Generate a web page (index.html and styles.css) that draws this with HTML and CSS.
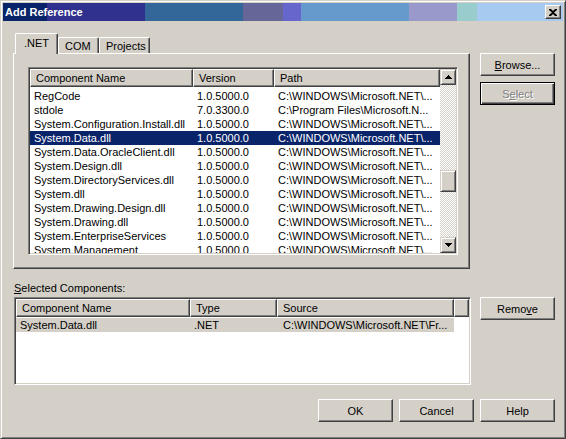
FILE: index.html
```html
<!DOCTYPE html>
<html>
<head>
<meta charset="utf-8">
<title>Add Reference</title>
<link rel="stylesheet" href="styles.css">
</head>
<body>
<div class="window">
  <div class="titlebar">
    <span class="title">Add Reference</span>
    <span class="close"><svg width="8" height="7" viewBox="0 0 8 7"><path d="M0 0h2l2 2 2-2h2v1L5 3.5 8 6v1H6L4 5 2 7H0V6l3-2.5L0 1z" fill="#000"/></svg></span>
  </div>
  <div class="content">
    <div class="left-top">
      <div class="tabstrip">
        <div class="tab active">.NET</div>
        <div class="tab com">COM</div>
        <div class="tab projects">Projects</div>
      </div>
      <div class="tabpanel">
        <div class="listview">
          <div class="lv-main">
            <div class="header">
              <div class="hcol w-name">Component Name</div>
              <div class="hcol w-ver">Version</div>
              <div class="hcol w-path">Path</div>
            </div>
            <div class="rows">
              <div class="row"><span class="w-name">RegCode</span><span class="w-ver">1.0.5000.0</span><span class="w-path">C:\WINDOWS\Microsoft.NET\...</span></div>
              <div class="row"><span class="w-name">stdole</span><span class="w-ver">7.0.3300.0</span><span class="w-path">C:\Program Files\Microsoft.N...</span></div>
              <div class="row"><span class="w-name">System.Configuration.Install.dll</span><span class="w-ver">1.0.5000.0</span><span class="w-path">C:\WINDOWS\Microsoft.NET\...</span></div>
              <div class="row selected"><span class="w-name">System.Data.dll</span><span class="w-ver">1.0.5000.0</span><span class="w-path">C:\WINDOWS\Microsoft.NET\...</span></div>
              <div class="row"><span class="w-name">System.Data.OracleClient.dll</span><span class="w-ver">1.0.5000.0</span><span class="w-path">C:\WINDOWS\Microsoft.NET\...</span></div>
              <div class="row"><span class="w-name">System.Design.dll</span><span class="w-ver">1.0.5000.0</span><span class="w-path">C:\WINDOWS\Microsoft.NET\...</span></div>
              <div class="row"><span class="w-name">System.DirectoryServices.dll</span><span class="w-ver">1.0.5000.0</span><span class="w-path">C:\WINDOWS\Microsoft.NET\...</span></div>
              <div class="row"><span class="w-name">System.dll</span><span class="w-ver">1.0.5000.0</span><span class="w-path">C:\WINDOWS\Microsoft.NET\...</span></div>
              <div class="row"><span class="w-name">System.Drawing.Design.dll</span><span class="w-ver">1.0.5000.0</span><span class="w-path">C:\WINDOWS\Microsoft.NET\...</span></div>
              <div class="row"><span class="w-name">System.Drawing.dll</span><span class="w-ver">1.0.5000.0</span><span class="w-path">C:\WINDOWS\Microsoft.NET\...</span></div>
              <div class="row"><span class="w-name">System.EnterpriseServices</span><span class="w-ver">1.0.5000.0</span><span class="w-path">C:\WINDOWS\Microsoft.NET\...</span></div>
              <div class="row"><span class="w-name">System.Management</span><span class="w-ver">1.0.5000.0</span><span class="w-path">C:\WINDOWS\Microsoft.NET\...</span></div>
            </div>
          </div>
          <div class="vscroll">
            <div class="sbtn"><svg width="7" height="4" viewBox="0 0 7 4"><path d="M3 0h1v1h1v1h1v1h1v1H0V3h1V2h1V1h1z" fill="#000"/></svg></div>
            <div class="track"><div class="thumb"></div></div>
            <div class="sbtn"><svg width="7" height="4" viewBox="0 0 7 4"><path d="M0 0h7v1H6v1H5v1H4v1H3V3H2V2H1V1H0z" fill="#000"/></svg></div>
          </div>
        </div>
      </div>
    </div>
    <div class="right-top">
      <div class="btn"><u>B</u>rowse...</div>
      <div class="btn default disabled"><span>S<u>e</u>lect</span></div>
    </div>
    <div class="left-bottom">
      <div class="label"><u>S</u>elected Components:</div>
      <div class="listview2">
        <div class="header">
          <div class="hcol w2-name">Component Name</div>
          <div class="hcol w2-type">Type</div>
          <div class="hcol w2-src">Source</div>
          <div class="hcol w2-fill"></div>
        </div>
        <div class="rows2">
          <div class="row2"><span class="w2-name">System.Data.dll</span><span class="w2-type">.NET</span><span class="w2-src">C:\WINDOWS\Microsoft.NET\Fr...</span></div>
        </div>
      </div>
    </div>
    <div class="right-bottom">
      <div class="btn">Remo<u>v</u>e</div>
    </div>
  </div>
  <div class="footer">
    <div class="btn">OK</div>
    <div class="btn">Cancel</div>
    <div class="btn">Help</div>
  </div>
</div>
</body>
</html>
```
FILE: styles.css
```css
* { box-sizing: border-box; }
html, body { margin: 0; padding: 0; background: #d4d0c8; }
body {
  font-family: "Liberation Sans", Arial, sans-serif;
  font-size: 11px;
  color: #000;
}
u { text-decoration: underline; text-underline-offset: 1px; }

.window {
  width: 566px;
  height: 439px;
  background: #d4d0c8;
  border: 1px solid;
  border-color: #d4d0c8 #404040 #404040 #d4d0c8;
  box-shadow: inset 1px 1px #fff, inset -1px -1px #808080;
  padding: 2px;
  display: flex;
  flex-direction: column;
}

.titlebar {
  height: 18px;
  display: flex;
  align-items: center;
  justify-content: space-between;
  padding: 0 2px 0 2px;
  background: linear-gradient(to right,
    #0a246a 0 44px,
    #30308e 44px 142px,
    #336699 142px 240px,
    #666699 240px 280px,
    #6666cc 280px 298px,
    #6699cc 298px 406px,
    #9999cc 406px 454px,
    #99cccc 454px 474px,
    #a6caf0 474px);
}
.title {
  color: #fff;
  font-weight: bold;
  font-size: 11px;
}
.close {
  width: 16px;
  height: 14px;
  background: #d4d0c8;
  border: 1px solid;
  border-color: #fff #404040 #404040 #fff;
  box-shadow: inset -1px -1px #808080;
  display: flex;
  align-items: center;
  justify-content: center;
}

.content {
  display: grid;
  grid-template-columns: 457px 75px;
  column-gap: 10px;
  padding: 12px 0 0 10px;
}

/* tabs */
.tabstrip {
  height: 20px;
  display: flex;
  align-items: flex-end;
  padding-left: 2px;
}
.tab {
  height: 16px;
  padding: 2px 0 0 6px;
  line-height: 13px;
  border: 1px solid;
  border-bottom: none;
  border-color: #fff #404040 #404040 #fff;
  box-shadow: inset -1px 0 #808080;
  border-radius: 2px 2px 0 0;
  background: #d4d0c8;
}
.tab.active {
  width: 43px;
  height: 21px;
  margin-bottom: -1px;
  padding: 3px 0 0 8px;
  position: relative;
  z-index: 1;
}
.tab.com { width: 41px; }
.tab.projects { width: 51px; }

.tabpanel {
  height: 216px;
  border: 1px solid;
  border-color: #fff #404040 #404040 #fff;
  box-shadow: inset -1px -1px #808080;
  padding: 13px 0 0 14px;
}

.listview {
  width: 430px;
  height: 188px;
  border: 1px solid;
  border-color: #808080 #fff #fff #808080;
  box-shadow: inset 1px 1px #404040, inset -1px -1px #d4d0c8;
  padding: 1px;
  display: flex;
  background: #fff;
}
.lv-main {
  width: 410px;
  overflow: hidden;
}
.header {
  display: flex;
  height: 18px;
}
.hcol {
  height: 18px;
  line-height: 16px;
  padding-left: 5px;
  background: #d4d0c8;
  border: 1px solid;
  border-color: #fff #404040 #404040 #fff;
  box-shadow: inset -1px -1px #808080;
  white-space: nowrap;
  overflow: hidden;
}
.w-name { width: 163px; }
.w-ver { width: 81px; }
.w-path { width: 166px; }

.rows { padding-top: 2px; }
.row {
  display: flex;
  height: 14px;
  line-height: 14px;
  white-space: nowrap;
}
.row span { padding-left: 4px; overflow: hidden; }
.row.selected { background: #0a246a; color: #fff; }

.vscroll {
  width: 16px;
  display: flex;
  flex-direction: column;
}
.sbtn, .thumb {
  background: #d4d0c8;
  border: 1px solid;
  border-color: #d4d0c8 #404040 #404040 #d4d0c8;
  box-shadow: inset 1px 1px #fff, inset -1px -1px #808080;
}
.sbtn {
  height: 16px;
  display: flex;
  align-items: center;
  justify-content: center;
}
.track {
  flex: 1;
  background: conic-gradient(#fff 25%, #d4d0c8 0 50%, #fff 0 75%, #d4d0c8 0) 0 0 / 2px 2px;
}
.thumb {
  height: 22px;
  margin-top: 85px;
}

/* right buttons */
.right-top {
  padding-top: 20px;
  display: flex;
  flex-direction: column;
  gap: 6px;
}
.btn {
  width: 75px;
  height: 23px;
  display: flex;
  align-items: center;
  justify-content: center;
  background: #d4d0c8;
  border: 1px solid;
  border-color: #fff #404040 #404040 #fff;
  box-shadow: inset -1px -1px #808080;
}
.btn.default {
  border: 1px solid #000;
  box-shadow: inset 1px 1px #fff, inset -1px -1px #404040, inset -2px -2px #808080;
}
.btn.disabled { color: #808080; text-shadow: 1px 1px #fff; }

/* selected components */
.label {
  margin: 12px 0 0 1px;
  height: 14px;
  line-height: 14px;
}
.listview2 {
  margin: 2px 0 0 1px;
  width: 457px;
  height: 88px;
  border: 1px solid;
  border-color: #808080 #fff #fff #808080;
  box-shadow: inset 1px 1px #404040, inset -1px -1px #d4d0c8;
  padding: 1px;
  background: #fff;
}
.w2-name { width: 174px; }
.w2-type { width: 87px; }
.w2-src { width: 177px; }
.w2-fill { width: 15px; }
.rows2 { padding-top: 1px; }
.row2 {
  display: flex;
  width: 438px;
  height: 14px;
  line-height: 14px;
  background: #d4d0c8;
  white-space: nowrap;
}
.row2 span { padding-left: 4px; overflow: hidden; }
.row2 .w2-src { padding-left: 6px; }

.right-bottom { padding-top: 28px; }

.footer {
  display: flex;
  justify-content: flex-end;
  gap: 6px;
  margin-top: 14px;
  padding-right: 8px;
}
```
